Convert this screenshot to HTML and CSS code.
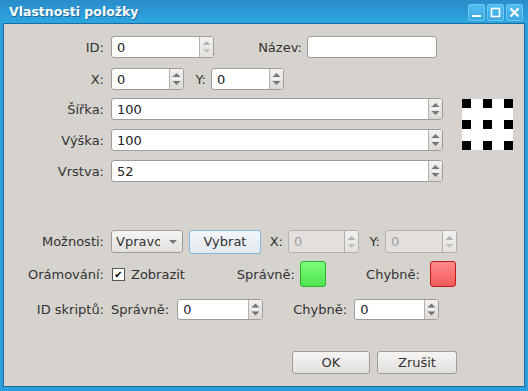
FILE: index.html
```html
<!DOCTYPE html>
<html lang="cs">
<head>
    <meta charset="UTF-8">
    <title>Vlastnosti položky</title>
    <link rel="stylesheet" href="styles.css">
</head>
<body>
    <div class="window">
        <div class="titlebar">
            <span class="title">Vlastnosti položky</span>
            <div class="title-buttons">
                <span class="tbtn"><svg width="17" height="17" viewBox="0 0 17 17"><rect x="4" y="11" width="9" height="2" fill="#fff"/></svg></span>
                <span class="tbtn"><svg width="17" height="17" viewBox="0 0 17 17"><rect x="4.5" y="4.5" width="8" height="8" fill="none" stroke="#fff" stroke-width="1.6"/></svg></span>
                <span class="tbtn"><svg width="17" height="17" viewBox="0 0 17 17"><path d="M4.5 4.5 L12.5 12.5 M12.5 4.5 L4.5 12.5" stroke="#fff" stroke-width="2.2"/></svg></span>
            </div>
        </div>
        <div class="frame">
            <div class="content">

                <div class="row r1">
                    <label class="lbl">ID:</label>
                    <div class="spin disabled-arrows w103"><span class="val">0</span><span class="arrows"></span></div>
                    <label class="lbl nazev">Název:</label>
                    <div class="field w130"></div>
                </div>

                <div class="row r2">
                    <label class="lbl">X:</label>
                    <div class="spin w73"><span class="val">0</span><span class="arrows"></span></div>
                    <label class="lbl ylbl">Y:</label>
                    <div class="spin w73"><span class="val">0</span><span class="arrows"></span></div>
                </div>

                <div class="size-block">
                    <div class="size-rows">
                        <div class="row r3">
                            <label class="lbl">Šířka:</label>
                            <div class="spin w332"><span class="val">100</span><span class="arrows"></span></div>
                        </div>
                        <div class="row r4">
                            <label class="lbl">Výška:</label>
                            <div class="spin w332"><span class="val">100</span><span class="arrows"></span></div>
                        </div>
                        <div class="row r4">
                            <label class="lbl">Vrstva:</label>
                            <div class="spin w332"><span class="val">52</span><span class="arrows"></span></div>
                        </div>
                    </div>
                    <div class="pattern">
                        <span></span><span></span><span></span>
                        <span></span><span></span><span></span>
                        <span></span><span></span><span></span>
                    </div>
                </div>

                <div class="row r6">
                    <label class="lbl">Možnosti:</label>
                    <div class="combo"><span class="combo-text">Vpravo</span><span class="combo-arrow"></span></div>
                    <button class="btn focus w72">Vybrat</button>
                    <label class="lbl small">X:</label>
                    <div class="spin disabled w71"><span class="val">0</span><span class="arrows"></span></div>
                    <label class="lbl small">Y:</label>
                    <div class="spin disabled w72"><span class="val">0</span><span class="arrows"></span></div>
                </div>

                <div class="row r7">
                    <label class="lbl">Orámování:</label>
                    <span class="check">✔</span>
                    <span class="check-text">Zobrazit</span>
                    <label class="lbl ok-lbl">Správně:</label>
                    <span class="swatch green"></span>
                    <label class="lbl bad-lbl">Chybně:</label>
                    <span class="swatch red"></span>
                </div>

                <div class="row r8">
                    <label class="lbl">ID skriptů:</label>
                    <span class="plain">Správně:</span>
                    <div class="spin w86"><span class="val">0</span><span class="arrows"></span></div>
                    <label class="lbl script-bad">Chybně:</label>
                    <div class="spin w85"><span class="val">0</span><span class="arrows"></span></div>
                </div>

                <div class="actions">
                    <button class="btn w78">OK</button>
                    <button class="btn w80">Zrušit</button>
                </div>

            </div>
        </div>
    </div>
</body>
</html>
```

FILE: styles.css
```css
body {
    margin: 0;
    font-family: 'DejaVu Sans', sans-serif;
    font-size: 13px;
    color: #333;
}
.window {
    width: 528px;
    height: 391px;
    display: flex;
    flex-direction: column;
    background: #2b9fdb;
}
.titlebar {
    height: 23px;
    display: flex;
    align-items: center;
    justify-content: space-between;
    background: linear-gradient(#2a8ccb, #2ca6e0);
}
.title {
    color: #fff;
    font-weight: bold;
    font-size: 12.5px;
    margin-left: 9px;
    text-shadow: 1px 1px 0 #1d6a99;
}
.title-buttons {
    display: flex;
    gap: 2px;
    margin-right: 5px;
    margin-top: 2px;
}
.tbtn {
    width: 17px;
    height: 17px;
    border: 1px solid #70c6f1;
    border-radius: 2px;
    background: linear-gradient(#52bdf0, #3aa9e4);
    box-sizing: border-box;
    display: flex;
    align-items: center;
    justify-content: center;
}
.tbtn svg {
    margin: -1px;
}
.frame {
    flex: 1;
    display: flex;
    padding: 0 3px 4px 3px;
}
.content {
    flex: 1;
    border: 1px solid #1a6d9f;
    background: #d6d2ce;
    padding-top: 12px;
}
.row {
    display: flex;
    align-items: center;
    height: 22px;
}
.r2 { margin-top: 10px; }
.r3 { margin-top: 8px; }
.r4 { margin-top: 9px; }
.r6 { margin-top: 48px; height: 23px; }
.r7 { margin-top: 8px; height: 26px; }
.r8 { margin-top: 12px; height: 21px; }
.lbl {
    width: 100px;
    text-align: right;
    margin-right: 7px;
    flex: none;
}
.nazev { width: 83px; margin-left: 5px; margin-right: 5px; }
.ylbl { width: 22px; margin-right: 5px; }
.small { width: 21px; margin-right: 5px; }
.ok-lbl { width: 104px; margin-right: 5px; }
.bad-lbl { width: 94px; margin-right: 10px; }
.script-bad { width: 84px; margin-right: 7px; }
.plain { margin-right: 8px; }

.spin, .field {
    height: 100%;
    box-sizing: border-box;
    display: flex;
    border: 1px solid #a09c98;
    border-radius: 3px;
    background: #fff;
    overflow: hidden;
    flex: none;
}
.val {
    flex: 1;
    padding-left: 5px;
    display: flex;
    align-items: center;
    color: #222;
}
.arrows {
    width: 13px;
    border-left: 1px solid #b4b0ac;
    background:
        url("data:image/svg+xml,%3Csvg xmlns='http://www.w3.org/2000/svg' width='13' height='20'%3E%3Cpath d='M2.5 8 L6.5 4 L10.5 8 Z' fill='%23777'/%3E%3Cpath d='M2.5 12 L6.5 16 L10.5 12 Z' fill='%23777'/%3E%3Cpath d='M2 10 H11' stroke='%23ffffff' stroke-width='1'/%3E%3C/svg%3E") center / 13px 20px no-repeat,
        linear-gradient(#f2f1f0, #dcd9d6);
}
.disabled-arrows .arrows, .disabled .arrows {
    background:
        url("data:image/svg+xml,%3Csvg xmlns='http://www.w3.org/2000/svg' width='13' height='20'%3E%3Cpath d='M2.5 8 L6.5 4 L10.5 8 Z' fill='%23b5b3b0'/%3E%3Cpath d='M2.5 12 L6.5 16 L10.5 12 Z' fill='%23c4c2bf'/%3E%3C/svg%3E") center / 13px 20px no-repeat,
        linear-gradient(#f2f1f0, #e4e1de);
}
.disabled {
    background: #e2dfdc;
    border-color: #b4b0ac;
}
.disabled .val { color: #a09d9a; }

.w71 { width: 71px; }
.w72 { width: 72px; }
.w73 { width: 73px; }
.w78 { width: 78px; }
.w80 { width: 80px; }
.w85 { width: 85px; }
.w86 { width: 86px; }
.w103 { width: 103px; }
.w130 { width: 130px; }
.w332 { width: 332px; }

.size-block {
    display: flex;
}
.pattern {
    width: 51px;
    height: 51px;
    margin-left: 19px;
    margin-top: 9px;
    background: #fff;
    display: grid;
    grid-template-columns: 9px 9px 9px;
    grid-template-rows: 9px 9px 9px;
    justify-content: space-between;
    align-content: space-between;
}
.pattern span {
    background: #000;
}

.combo {
    width: 72px;
    height: 23px;
    box-sizing: border-box;
    display: flex;
    align-items: center;
    border: 1px solid #a09c98;
    border-radius: 3px;
    background: linear-gradient(#f6f5f4, #e2e0dd);
    margin-right: 6px;
}
.combo-text {
    width: 44px;
    margin-left: 4px;
    overflow: hidden;
    white-space: nowrap;
    flex: none;
}
.combo-arrow {
    margin-left: 9px;
    width: 0;
    height: 0;
    border-left: 4px solid transparent;
    border-right: 4px solid transparent;
    border-top: 4px solid #777;
}
.btn {
    height: 23px;
    box-sizing: border-box;
    font-family: 'DejaVu Sans', sans-serif;
    font-size: 13px;
    color: #333;
    border: 1px solid #a09c98;
    border-radius: 3px;
    background: linear-gradient(#f6f5f4, #e2e0dd);
    padding: 0;
    flex: none;
}
.btn.focus {
    border-color: #83b7dc;
    background: linear-gradient(#f3f6f9, #e2e8ee);
    height: 24px;
    margin-right: 1px;
}
.check {
    width: 13px;
    height: 13px;
    box-sizing: border-box;
    border: 1px solid #555;
    background: #fff;
    font-size: 10px;
    line-height: 11px;
    text-align: center;
    color: #000;
    margin-left: 1px;
    margin-right: 6px;
    flex: none;
}
.check-text {
    width: 60px;
    flex: none;
}
.swatch {
    width: 26px;
    height: 26px;
    box-sizing: border-box;
    border-radius: 3px;
    flex: none;
}
.green {
    background: linear-gradient(#7dfc7d, #4ee54e);
    border: 1px solid #2ab32a;
}
.red {
    background: linear-gradient(#ff8a8a, #f25a5a);
    border: 1px solid #c21a1a;
}
.actions {
    display: flex;
    justify-content: flex-end;
    gap: 7px;
    margin-top: 31px;
    padding-right: 67px;
}
```
